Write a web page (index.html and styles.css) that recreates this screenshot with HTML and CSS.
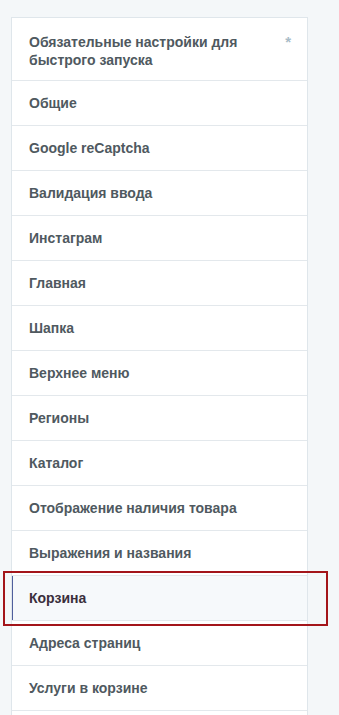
FILE: index.html
```html
<!DOCTYPE html>
<html lang="ru">
<head>
    <meta charset="UTF-8">
    <title>Настройки</title>
    <link rel="stylesheet" href="styles.css">
</head>
<body>
    <div class="settings">
        <ul class="settings-nav">
            <li><a href="#" class="first">Обязательные настройки для быстрого запуска<span class="star">*</span></a></li>
            <li><a href="#">Общие</a></li>
            <li><a href="#">Google reCaptcha</a></li>
            <li><a href="#">Валидация ввода</a></li>
            <li><a href="#">Инстаграм</a></li>
            <li><a href="#">Главная</a></li>
            <li><a href="#">Шапка</a></li>
            <li><a href="#">Верхнее меню</a></li>
            <li><a href="#">Регионы</a></li>
            <li><a href="#">Каталог</a></li>
            <li><a href="#">Отображение наличия товара</a></li>
            <li><a href="#">Выражения и названия</a></li>
            <li class="mark"><a href="#" class="active">Корзина</a></li>
            <li><a href="#">Адреса страниц</a></li>
            <li><a href="#">Услуги в корзине</a></li>
            <li><a href="#"></a></li>
        </ul>
    </div>
</body>
</html>
```

FILE: styles.css
```css
* {
    margin: 0;
    padding: 0;
    box-sizing: border-box;
}

body {
    background: #f4f7f9;
    font-family: "Liberation Sans", Arial, sans-serif;
    overflow: hidden;
}

.settings {
    padding: 17px 0 0 11px;
    width: 308px;
}

.settings-nav {
    list-style: none;
    background: #fff;
    border: 1px solid #dfe6eb;
    border-bottom: none;
}

.settings-nav li {
    border-bottom: 1px solid #e3e8ec;
    position: relative;
}

.settings-nav a {
    display: flex;
    align-items: center;
    height: 44px;
    padding: 0 18px 0 17px;
    font-size: 14px;
    font-weight: bold;
    color: #4f5960;
    text-decoration: none;
}

.settings-nav a.first {
    height: 62px;
    align-items: flex-start;
    padding-top: 15px;
    padding-right: 40px;
    line-height: 18px;
}

.settings-nav .star {
    position: absolute;
    right: 16px;
    top: 15px;
    color: #a9bcc7;
    font-size: 15px;
}

.settings-nav a.active {
    background: #f6f9fb;
    color: #3a2f3c;
    border-left: 1px solid #4f5f9c;
    padding-left: 16px;
}

.settings-nav li.mark::after {
    content: "";
    position: absolute;
    left: -9px;
    right: -21px;
    top: -5px;
    bottom: -6px;
    border: 2px solid #a3151a;
}
```
